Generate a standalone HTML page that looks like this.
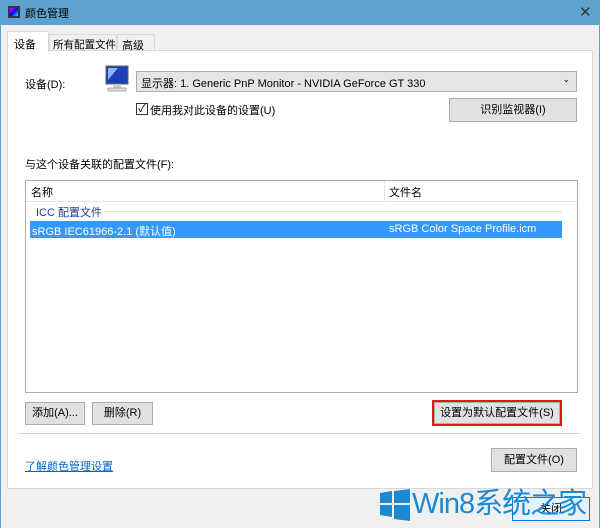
<!DOCTYPE html>
<html><head><meta charset="utf-8"><style>
*{box-sizing:border-box;margin:0;padding:0;white-space:nowrap}
body{width:600px;height:528px;overflow:hidden;background:#f0f0f0;font-family:"Liberation Sans","Noto Sans CJK SC",sans-serif;font-size:12px;color:#000;position:relative}
.a{position:absolute}
.btn{position:absolute;background:#e1e1e1;border:1px solid #adadad;text-align:center;font-size:11px;line-height:20px}
</style></head><body>
<div class="a" style="left:0;top:0;width:600px;height:25px;background:#5ea3cf"></div>
<div class="a" style="left:0;top:0;width:1px;height:528px;background:#5ea3cf"></div>
<div class="a" style="left:599px;top:0;width:1px;height:528px;background:#5ea3cf"></div>
<div class="a" style="left:8px;top:6px;width:12px;height:12px;background:linear-gradient(135deg,#f0f,#00f,#0ff);border:2px solid #334"></div>
<div class="a" style="left:25px;top:5px;font-size:11px;color:#000">颜色管理</div>
<div class="a" style="left:579px;top:3px;font-size:15px;color:#333">✕</div>
<div class="a" style="left:7px;top:50px;width:586px;height:439px;background:#fff;border:1px solid #d9d9d9"></div>
<div class="a" style="left:7px;top:31px;width:42px;height:21px;background:#fff;border:1px solid #d9d9d9;border-bottom:none;font-size:11px;padding:4px 0 0 6px">设备</div>
<div class="a" style="left:49px;top:34px;width:68px;height:17px;background:#f0f0f0;border:1px solid #d9d9d9;font-size:10.5px;padding:2px 0 0 3px;overflow:hidden">所有配置文件</div>
<div class="a" style="left:117px;top:34px;width:38px;height:17px;background:#f0f0f0;border:1px solid #d9d9d9;font-size:11px;padding:2px 0 0 4px">高级</div>
<div class="a" style="left:25px;top:76px;font-size:11px">设备(D):</div>
<svg class="a" style="left:104px;top:64px" width="26" height="30"><rect x="2" y="2" width="22" height="18" fill="#1a3fb8" stroke="#666"/><path d="M4 4 L14 4 L4 16Z" fill="#8fb6f0"/><rect x="9" y="20" width="8" height="4" fill="#ccc"/><rect x="4" y="24" width="18" height="3" fill="#ddd" stroke="#aaa"/></svg>
<div class="a" style="left:136px;top:71px;width:441px;height:21px;background:#e5e5e5;border:1px solid #adadad;font-size:11px;padding:3px 0 0 4px">显示器: 1. Generic PnP Monitor - NVIDIA GeForce GT 330<span style="position:absolute;right:6px;top:2px;font-size:9px">⌄</span></div>
<div class="a" style="left:136px;top:103px;width:12px;height:12px;border:1px solid #333;background:#fff;font-size:11px;line-height:10px;text-align:center">✓</div>
<div class="a" style="left:150px;top:102px;font-size:11px">使用我对此设备的设置(U)</div>
<div class="btn" style="left:449px;top:98px;width:128px;height:24px;line-height:22px">识别监视器(I)</div>
<div class="a" style="left:25px;top:156px;font-size:11px">与这个设备关联的配置文件(F):</div>
<div class="a" style="left:25px;top:180px;width:553px;height:213px;border:1px solid #adadad;background:#fff"></div>
<div class="a" style="left:26px;top:181px;width:551px;height:21px;border-bottom:1px solid #e5e5e5;font-size:11px;padding:3px 0 0 5px">名称</div>
<div class="a" style="left:384px;top:181px;width:1px;height:21px;background:#e5e5e5"></div>
<div class="a" style="left:389px;top:184px;font-size:11px">文件名</div>
<div class="a" style="left:36px;top:204px;font-size:11px;color:#1e3d8f">ICC 配置文件</div>
<div class="a" style="left:104px;top:211px;width:458px;height:1px;background:#dde4ee"></div>
<div class="a" style="left:30px;top:221px;width:532px;height:17px;background:#3399ff;color:#fff;font-size:11px;padding:2px 0 0 2px">sRGB IEC61966-2.1 (默认值)<span style="position:absolute;left:359px;top:2px">sRGB Color Space Profile.icm</span></div>
<div class="btn" style="left:25px;top:402px;width:60px;height:23px">添加(A)...</div>
<div class="btn" style="left:92px;top:402px;width:61px;height:23px">删除(R)</div>
<div class="btn" style="left:434px;top:402px;width:126px;height:22px">设置为默认配置文件(S)</div>
<div class="a" style="left:432px;top:400px;width:130px;height:26px;border:2px solid #e8141c"></div>
<div class="a" style="left:18px;top:433px;width:562px;height:1px;background:#d0d0d0"></div>
<div class="a" style="left:25px;top:458px;font-size:11px;color:#0066cc;text-decoration:underline">了解颜色管理设置</div>
<div class="btn" style="left:491px;top:448px;width:86px;height:24px;line-height:22px">配置文件(O)</div>
<div class="btn" style="left:512px;top:497px;width:78px;height:24px;background:#e5f1fb;border-color:#0078d7;line-height:22px">关闭</div>
<svg class="a" style="left:380px;top:489px" width="30" height="32"><path d="M0 4 L12 2 L12 14 L0 14Z M14 2 L30 0 L30 14 L14 14Z M0 16 L12 16 L12 28 L0 26Z M14 16 L30 16 L30 32 L14 30Z" fill="#1a8ad4"/></svg>
<div class="a" style="left:412px;top:488px;font-size:29px;color:#1a8ad4;line-height:32px;letter-spacing:-1px">Win8系统之家</div>
</body></html>
